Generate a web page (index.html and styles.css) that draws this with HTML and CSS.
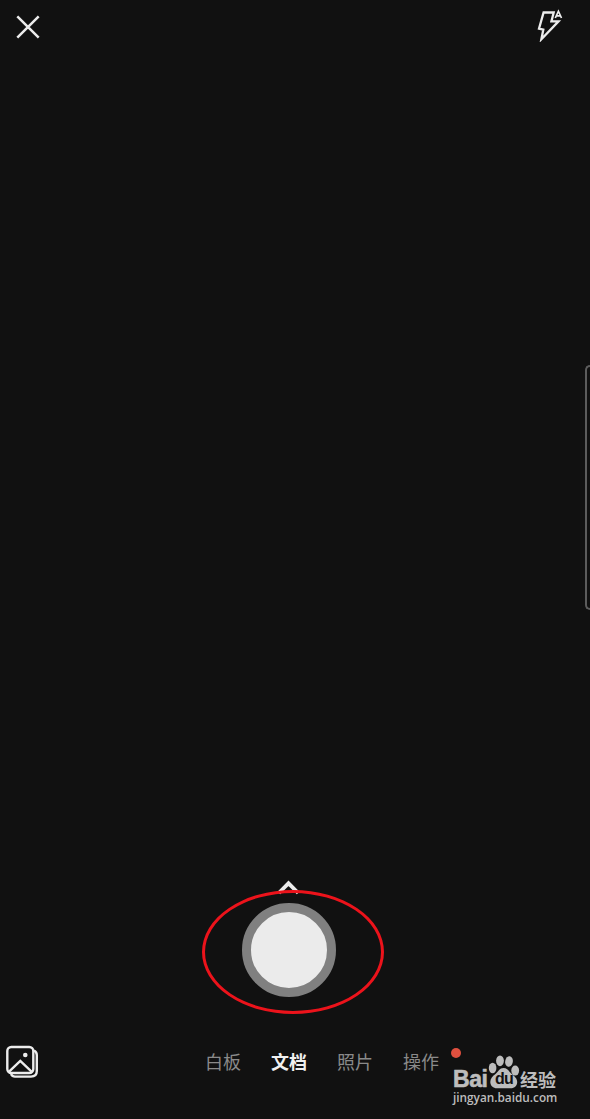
FILE: index.html
```html
<!DOCTYPE html>
<html lang="zh-CN">
<head>
<meta charset="utf-8">
<title>文档</title>
<link rel="stylesheet" href="styles.css">
</head>
<body>

<header class="topbar">
  <svg class="close" width="26" height="26" viewBox="0 0 26 26"><path d="M2.3 2.3 23.7 23.7M23.7 2.3 2.3 23.7"/></svg>
  <svg class="flash" width="30" height="34" viewBox="0 0 30 34">
    <path d="M8.6 4.5H18.7L16.4 13.4H23.5L6.4 31.2 8.3 21.7 4 20.6Z"/>
    <path class="auto" d="M20.3 10 23.4 3.2 26.5 10M21.5 7.8H25.3"/>
  </svg>
</header>

<main class="viewfinder">
  <div class="edge-panel"></div>
</main>

<section class="shutter-area">
  <svg class="chevron" width="24" height="16" viewBox="0 0 24 16"><path d="M1.8 14 11.5 4.3 21.2 14"/></svg>
  <div class="shutter"></div>
  <div class="marker"></div>
</section>

<footer class="bottombar">
  <svg class="gallery" width="34" height="34" viewBox="0 0 34 34">
    <rect x="2.3" y="2" width="26" height="26" rx="4"/>
    <path d="M6 29C7 31 8.5 31.6 10 31.6H26C29.5 31.6 31.8 29.5 31.8 26V10C31.8 8 31 6.5 29 5.5"/>
    <path d="M3.8 26.8 15.3 16 26.8 26.8"/>
    <circle class="sun" cx="20.3" cy="10" r="2.3"/>
  </svg>
  <nav class="modes">
    <span>白板</span>
    <span class="active">文档</span>
    <span>照片</span>
    <span>操作<i class="dot"></i></span>
  </nav>
</footer>

<div class="watermark">
  <div class="brand">
    <span class="bai">Bai</span>
    <span class="paw">
      <svg width="32" height="34" viewBox="0 0 32 34">
        <ellipse cx="4.6" cy="13" rx="3.8" ry="5.2"/>
        <ellipse cx="12" cy="5.8" rx="3.9" ry="5.4"/>
        <ellipse cx="21" cy="6.5" rx="3.8" ry="5.3" transform="rotate(10 21 6.5)"/>
        <ellipse cx="27.2" cy="15.6" rx="3.9" ry="5"/>
        <path d="M15.5 13C11.5 13 10.5 16.5 7.5 19C4.2 21.5 2.3 23.5 2.3 27C2.3 30.8 5.2 33.3 9 33.3H22.5C26.8 33.3 29.2 30.5 29.2 27C29.2 23.5 26.7 21.5 23.8 19C20.7 16.3 19.5 13 15.5 13Z"/>
      </svg>
      <b>du</b>
    </span>
    <span class="jingyan">经验</span>
  </div>
  <div class="url">jingyan.baidu.com</div>
</div>

</body>
</html>
```

FILE: styles.css
```css
body {
  margin: 0;
  height: 1119px;
  display: flex;
  flex-direction: column;
  position: relative;
  overflow: hidden;
  background: #111;
  font-family: "Noto Sans CJK SC", sans-serif;
}

svg { display: block; fill: none; stroke: #ececec; stroke-width: 2; }

.topbar {
  display: flex;
  justify-content: space-between;
  height: 53px;
  padding: 0 25px 0 15px;
}
.close { margin-top: 14px; stroke-width: 2.5; }
.flash { margin-top: 8px; stroke-width: 2.3; }
.flash .auto { stroke-width: 1.7; }

.viewfinder {
  display: flex;
  justify-content: flex-end;
  height: 825px;
}
.edge-panel {
  width: 3px;
  height: 241px;
  margin-top: 312px;
  border: 2px solid #5c5c5c;
  border-right: 0;
  border-radius: 8px 0 0 8px;
}

.shutter-area {
  position: relative;
  height: 146px;
  width: 578px;
  display: flex;
  flex-direction: column;
  align-items: center;
}
.chevron { margin-top: 1px; stroke-width: 3.8; }
.shutter {
  box-sizing: border-box;
  width: 94px;
  height: 94px;
  margin-top: 8px;
  border: 9px solid #808080;
  border-radius: 50%;
  background: #ebebeb;
}
.marker {
  position: absolute;
  box-sizing: border-box;
  left: 202px;
  top: 12px;
  width: 182px;
  height: 124px;
  border: 3px solid #ec131b;
  border-radius: 50%;
}

.bottombar {
  display: flex;
  align-items: center;
  height: 76px;
  padding-left: 5px;
}
.gallery { stroke-width: 2.4; }
.gallery .sun { fill: #ececec; stroke: none; }
.modes {
  display: flex;
  gap: 30px;
  margin: 0 0 3px 166px;
  font-size: 18px;
  line-height: 26px;
  color: #8a8a8a;
}
.modes span { position: relative; }
.modes .active { color: #f0f0f0; font-weight: 700; }
.dot {
  position: absolute;
  left: 48px;
  top: 0;
  width: 10px;
  height: 10px;
  border-radius: 50%;
  background: #e0503f;
}

/* logo printed over the bottom corner */
.watermark {
  position: absolute;
  left: 452px;
  top: 1055px;
  color: #bdbdbd;
}
.brand { display: flex; height: 34px; }
.bai {
  box-sizing: border-box;
  width: 36px;
  padding: 14px 0 0 1px;
  font: 700 23px/20px "Liberation Sans", sans-serif;
  letter-spacing: -0.4px;
  -webkit-text-stroke: 0.6px #bdbdbd;
}
.paw { position: relative; width: 32px; }
.paw svg { fill: #bdbdbd; stroke: none; }
.paw b {
  position: absolute;
  left: 7px;
  top: 15px;
  font: 700 16px/18px "Liberation Sans", sans-serif;
  letter-spacing: -0.8px;
  color: #111;
}
.jingyan {
  padding-top: 14px;
  font-size: 18px;
  line-height: 20px;
  font-weight: 700;
}
.url {
  padding: 1px 0 0 1px;
  font: 600 11.8px/14px "Open Sans", sans-serif;
}
```
